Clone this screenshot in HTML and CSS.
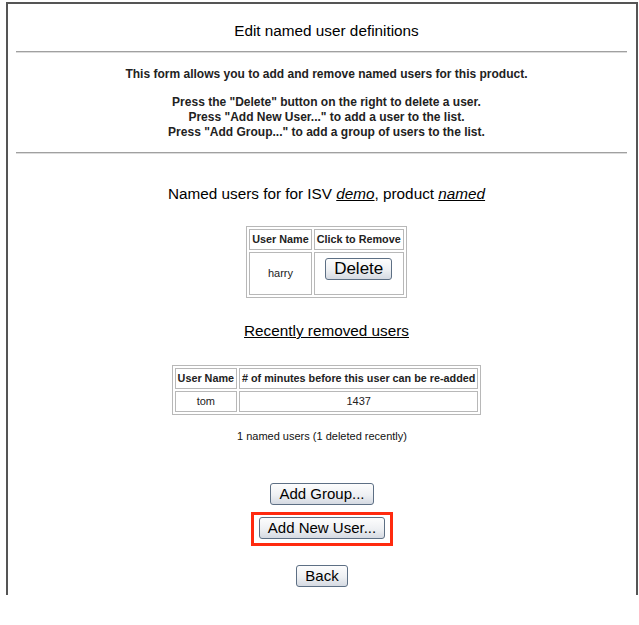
FILE: index.html
```html
<!DOCTYPE html>
<html>
<head>
<meta charset="utf-8">
<link rel="stylesheet" href="styles.css">
</head>
<body>
<div class="frame">
  <h1 class="title">Edit named user definitions</h1>
  <hr class="rule">
  <div class="intro">
    <p class="intro-lead">This form allows you to add and remove named users for this product.</p>
    <p class="intro-lines">Press the "Delete" button on the right to delete a user.<br>Press "Add New User..." to add a user to the list.<br>Press "Add Group..." to add a group of users to the list.</p>
  </div>
  <hr class="rule">
  <h2 class="heading">Named users for for ISV <u><i>demo</i></u>, product <u><i>named</i></u></h2>
  <table class="grid grid-users">
    <tr><th>User Name</th><th>Click to Remove</th></tr>
    <tr class="row-tall"><td class="name-cell">harry</td><td class="btn-cell"><button class="btn btn-delete">Delete</button></td></tr>
  </table>
  <h2 class="heading heading-removed"><u>Recently removed users</u></h2>
  <table class="grid grid-removed">
    <tr><th>User Name</th><th># of minutes before this user can be re-added</th></tr>
    <tr><td>tom</td><td>1437</td></tr>
  </table>
  <p class="count">1 named users (1 deleted recently)</p>
  <div class="actions">
    <button class="btn">Add Group...</button>
    <div class="highlight"><button class="btn">Add New User...</button></div>
    <button class="btn">Back</button>
  </div>
</div>
</body>
</html>
```

FILE: styles.css
```css
html, body {
  margin: 0;
  padding: 0;
  background: #fff;
}
body {
  font-family: "Liberation Sans", Arial, sans-serif;
  color: #111;
}
.frame {
  margin: 2px 0 0 6px;
  width: 628px;
  height: 591px;
  border-top: 2px solid #555;
  border-left: 2px solid #555;
  border-right: 2px solid #555;
  display: flex;
  flex-direction: column;
  align-items: center;
}
.title, .intro, .heading, .grid {
  margin-left: 9px;
}
.title {
  margin-top: 19px;
  margin-bottom: 0;
  font-size: 15.3px;
  font-weight: normal;
  line-height: 16px;
  color: #000;
}
.rule {
  align-self: stretch;
  margin: 12px 9px 0 8px;
  border: 0;
  border-top: 1px solid #a0a0a0;
  border-bottom: 1px solid #dcdcdc;
  height: 0;
}
.intro {
  text-align: center;
  font-size: 12px;
  font-weight: bold;
  line-height: 15px;
  color: #222;
}
.intro-lead {
  margin: 14px 0 0;
}
.intro-lines {
  margin: 13px 0 0;
}
.intro + .rule {
  margin-top: 12px;
}
.heading {
  margin-top: 31px;
  margin-bottom: 0;
  font-size: 15.3px;
  font-weight: normal;
  line-height: 17px;
  color: #000;
}
.heading-removed {
  margin-top: 24px;
}
.grid {
  border: 1px solid #b8b8b8;
  border-spacing: 2px;
  font-size: 11px;
  line-height: 13px;
  color: #222;
}
.grid th, .grid td {
  border: 1px solid #b8b8b8;
  padding: 3px 2px;
  text-align: center;
}
.grid th {
  font-weight: bold;
  font-size: 10.8px;
}
.grid-users {
  margin-top: 24px;
}
.grid-users th {
  height: 13px;
}
.row-tall td {
  height: 35px;
}
.name-cell {
  padding-top: 8px;
}
.btn-cell {
  vertical-align: top;
}
.grid-removed {
  margin-top: 26px;
}
.count {
  margin-top: 15px;
  margin-bottom: 0;
  font-size: 11px;
  line-height: 13px;
}
.actions {
  display: flex;
  flex-direction: column;
  align-items: center;
  margin-top: 40px;
}
.btn {
  font-family: "Liberation Sans", Arial, sans-serif;
  font-size: 15px;
  line-height: 16px;
  color: #000;
  padding: 2px 8px;
  border: 1px solid #5d6f84;
  border-radius: 3px;
  background: linear-gradient(#fdfdfd, #eef0f3 55%, #d5dae2);
}
.btn-delete {
  font-size: 17px;
  line-height: 18px;
  padding: 1px 8px;
  margin-top: 2px;
}
.highlight {
  margin: 7px 0 0;
  border: 3px solid #ff2a0f;
  padding: 2px 5px 4px;
}
.highlight + .btn {
  margin-top: 19px;
}
```
